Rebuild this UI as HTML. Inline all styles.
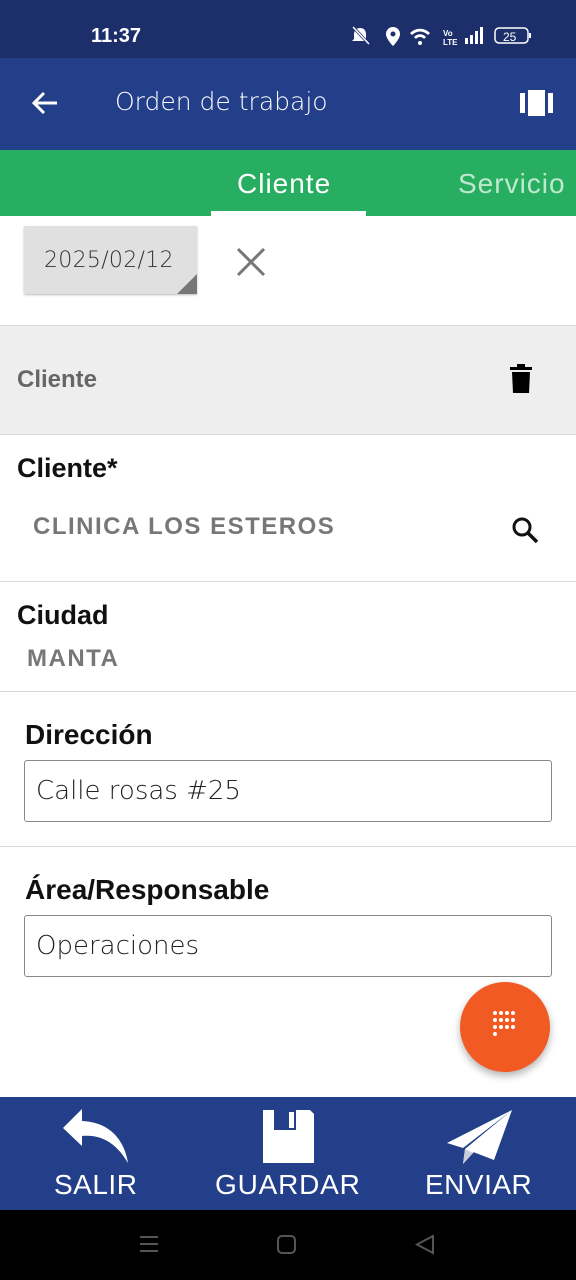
<!DOCTYPE html>
<html><head><meta charset="utf-8"><style>
*{margin:0;padding:0;box-sizing:border-box}
body{width:576px;height:1280px;position:relative;overflow:hidden;background:#fff;font-family:"Liberation Sans",sans-serif}
.a{position:absolute}
.t{position:absolute;white-space:nowrap;line-height:1}
.hr{position:absolute;left:0;width:576px;height:1px;background:#d8d8d8}
.lbl{font-size:28px;font-weight:bold;color:#111}
.inp{position:absolute;left:24px;width:528px;height:62px;border:1.5px solid #888;border-radius:3px}
</style></head><body>
<div class="a" style="left:0;top:0;width:576px;height:58px;background:#1d2f6b"></div>
<div class="t" style="left:91px;top:26px;color:#fff;font-size:20px;font-weight:bold">11:37</div>
<svg class="a" style="left:350px;top:24px" width="190" height="24" viewBox="0 0 190 24" fill="#fff">
<path d="M10 4 q6 0 6 7 v4 l2 2 h-16 l2-2 v-4 q0-7 6-7z"/><line x1="3" y1="3" x2="19" y2="20" stroke="#1d2f6b" stroke-width="3"/><line x1="3" y1="3" x2="19" y2="20" stroke="#fff" stroke-width="1.5"/>
<path d="M43 3 a7 7 0 0 1 7 7 c0 5-7 12-7 12 s-7-7-7-12 a7 7 0 0 1 7-7z"/><circle cx="43" cy="10" r="2.5" fill="#1d2f6b"/>
<path d="M60 9 a14 14 0 0 1 20 0 l-2 2 a11 11 0 0 0-16 0z M64 13 a8 8 0 0 1 12 0 l-2 2 a5 5 0 0 0-8 0z"/><circle cx="70" cy="19" r="2"/>
<text x="93" y="12" font-size="8" font-family="Liberation Sans" font-weight="bold">Vo</text><text x="93" y="21" font-size="8" font-family="Liberation Sans" font-weight="bold">LTE</text>
<rect x="115" y="14" width="3" height="6"/><rect x="120" y="11" width="3" height="9"/><rect x="125" y="7" width="3" height="13"/><rect x="130" y="3" width="3" height="17"/>
<rect x="145" y="4" width="33" height="15" rx="4" fill="none" stroke="#fff" stroke-width="1.5"/><rect x="179" y="9" width="2" height="5"/>
<text x="153" y="17" font-size="12" font-family="Liberation Sans">25</text>
</svg>
<div class="a" style="left:0;top:58px;width:576px;height:92px;background:#233f8a"></div>
<svg class="a" style="left:30px;top:89px" width="30" height="28" viewBox="0 0 30 28"><path d="M27 14 H4 M14 4 L4 14 L14 24" stroke="#fff" stroke-width="3" fill="none"/></svg>
<div class="t" style="left:115px;top:89px;color:#fff;font-size:25px;font-family:'DejaVu Sans',sans-serif;font-weight:200">Orden de trabajo</div>
<svg class="a" style="left:520px;top:90px" width="34" height="26" viewBox="0 0 34 26" fill="#fff"><rect x="0" y="3" width="5" height="20"/><rect x="8" y="0" width="17" height="26"/><rect x="28" y="3" width="5" height="20"/></svg>
<div class="a" style="left:0;top:150px;width:576px;height:66px;background:#27ae60"></div>
<div class="t" style="left:237px;top:170px;color:#fff;font-size:28px;letter-spacing:1px">Cliente</div>
<div class="t" style="left:458px;top:170px;color:#bfe8cf;font-size:28px;letter-spacing:1px">Servicio</div>
<div class="a" style="left:211px;top:211px;width:155px;height:5px;background:#fff"></div>
<div class="a" style="left:24px;top:226px;width:173px;height:68px;background:#e0e0e0;box-shadow:0 1px 2px #bbb"></div>
<div class="a" style="left:177px;top:274px;width:0;height:0;border-left:20px solid transparent;border-bottom:20px solid #777"></div>
<div class="t" style="left:44px;top:250px;color:#333;font-size:22px;font-family:'DejaVu Sans',sans-serif;font-weight:200;letter-spacing:0.3px">2025/02/12</div>
<svg class="a" style="left:236px;top:247px" width="30" height="30"><path d="M2 2 L28 28 M28 2 L2 28" stroke="#777" stroke-width="3"/></svg>
<div class="hr" style="top:325px"></div>
<div class="a" style="left:0;top:326px;width:576px;height:108px;background:#eeeeee"></div>
<div class="t" style="left:17px;top:368px;color:#666;font-size:24px;font-weight:bold">Cliente</div>
<svg class="a" style="left:510px;top:364px" width="22" height="30" viewBox="0 0 22 30"><rect x="0" y="3" width="22" height="3"/><rect x="7" y="0" width="8" height="4"/><path d="M2 8 H20 L19 29 H3z"/></svg>
<div class="hr" style="top:434px"></div>
<div class="t lbl" style="left:17px;top:455px;font-size:27px">Cliente*</div>
<div class="t" style="left:33px;top:515px;color:#777;font-size:24px;font-weight:bold;letter-spacing:1.5px">CLINICA LOS ESTEROS</div>
<svg class="a" style="left:510px;top:515px" width="30" height="30"><circle cx="12" cy="12" r="8" stroke="#111" stroke-width="3" fill="none"/><path d="M18 18 L27 27" stroke="#111" stroke-width="3.5"/></svg>
<div class="hr" style="top:581px"></div>
<div class="t lbl" style="left:17px;top:602px;font-size:27px">Ciudad</div>
<div class="t" style="left:27px;top:647px;color:#777;font-size:24px;font-weight:bold;letter-spacing:1.5px">MANTA</div>
<div class="hr" style="top:691px"></div>
<div class="t lbl" style="left:25px;top:721px">Dirección</div>
<div class="inp" style="top:760px"></div>
<div class="t" style="left:36px;top:778px;color:#222;font-size:26px;font-family:'DejaVu Sans',sans-serif;font-weight:200">Calle rosas #25</div>
<div class="hr" style="top:846px"></div>
<div class="t lbl" style="left:25px;top:876px">Área/Responsable</div>
<div class="inp" style="top:915px"></div>
<div class="t" style="left:36px;top:933px;color:#222;font-size:26px;font-family:'DejaVu Sans',sans-serif;font-weight:200">Operaciones</div>
<div class="a" style="left:460px;top:982px;width:90px;height:90px;border-radius:50%;background:#f15a22;box-shadow:0 4px 8px rgba(0,0,0,.3)"></div>
<svg class="a" style="left:490px;top:1008px" width="30" height="36" fill="#fff"><g><circle cx="5" cy="5" r="2"/><circle cx="11" cy="5" r="2"/><circle cx="17" cy="5" r="2"/><circle cx="23" cy="5" r="2"/><circle cx="5" cy="12" r="2"/><circle cx="11" cy="12" r="2"/><circle cx="17" cy="12" r="2"/><circle cx="23" cy="12" r="2"/><circle cx="5" cy="19" r="2"/><circle cx="11" cy="19" r="2"/><circle cx="17" cy="19" r="2"/><circle cx="23" cy="19" r="2"/><circle cx="5" cy="26" r="2"/></g></svg>
<div class="a" style="left:0;top:1097px;width:576px;height:113px;background:#243f8a"></div>
<svg class="a" style="left:60px;top:1108px" width="70" height="56" viewBox="0 0 70 56"><path d="M22 1 L3 20 L22 38 V28 C44 26 58 38 68 55 C64 30 48 14 22 13z" fill="#fff"/></svg>
<svg class="a" style="left:262px;top:1109px" width="54" height="55" viewBox="0 0 54 55"><path d="M1 1 H48 L52 5 V54 H1z" fill="#fff"/><rect x="12" y="1" width="22" height="20" fill="#243f8a"/><rect x="27" y="3" width="5" height="16" fill="#fff"/></svg>
<svg class="a" style="left:446px;top:1108px" width="68" height="56" viewBox="0 0 68 56"><path d="M66 2 L1 35 L17 40z M66 2 L19 41 L17 56z M66 2 L22 42 L48 52z" fill="#fff"/><path d="M19 41 L17 56 L27 45z" fill="#ccd"/></svg>
<div class="t" style="left:54px;top:1171px;color:#fff;font-size:28px;letter-spacing:0.5px">SALIR</div>
<div class="t" style="left:215px;top:1171px;color:#fff;font-size:28px;letter-spacing:0.8px">GUARDAR</div>
<div class="t" style="left:425px;top:1171px;color:#fff;font-size:28px;letter-spacing:0.5px">ENVIAR</div>
<div class="a" style="left:0;top:1210px;width:576px;height:70px;background:#000"></div>
<svg class="a" style="left:138px;top:1233px" width="310" height="24" fill="none" stroke="#555" stroke-width="2"><path d="M2 4 H20 M2 11 H20 M2 18 H20"/><rect x="140" y="3" width="17" height="17" rx="4"/><path d="M295 3 L279 11.5 L295 20z"/></svg>
</body></html>
